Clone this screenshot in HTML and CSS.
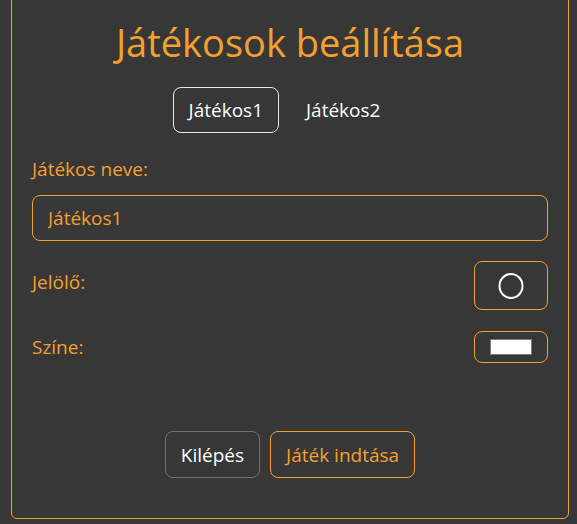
FILE: index.html
```html
<!DOCTYPE html>
<html lang="hu">
<head>
<meta charset="utf-8">
<title>Játékosok beállítása</title>
<link rel="stylesheet" href="styles.css">
</head>
<body>
<div class="card">
  <h1 class="title">Játékosok beállítása</h1>
  <nav class="tabs">
    <button class="tab active">Játékos1</button>
    <button class="tab">Játékos2</button>
  </nav>
  <label class="label name-label" for="pname">Játékos neve:</label>
  <input class="text-input" id="pname" type="text" value="Játékos1">
  <div class="row marker-row">
    <span class="label">Jelölő:</span>
    <button class="marker-btn" aria-label="Jelölő">
      <svg width="26" height="26" viewBox="0 0 26 26"><ellipse cx="13" cy="13" rx="11.5" ry="12" fill="none" stroke="#ffffff" stroke-width="2"/></svg>
    </button>
  </div>
  <div class="row color-row">
    <span class="label">Színe:</span>
    <span class="color-box"><span class="swatch"></span></span>
  </div>
  <div class="actions">
    <button class="btn btn-exit">Kilépés</button>
    <button class="btn btn-start">Játék indtása</button>
  </div>
</div>
</body>
</html>
```
FILE: styles.css
```css
html, body {
  margin: 0;
  padding: 0;
  background: #363736;
  overflow: hidden;
}
body {
  font-family: "Open Sans", "Noto Sans", sans-serif;
  color: #f5a031;
}
.card {
  margin: -12px 8px 0 11px;
  border: 1px solid #f5a031;
  border-radius: 6px;
  padding: 0 20px 40px 20px;
  height: 489px;
  box-sizing: content-box;
}
.title {
  margin: 0;
  padding-top: 27px;
  text-align: center;
  font-weight: 400;
  font-size: 38px;
  line-height: 52px;
  color: #f5a031;
}
.tabs {
  display: flex;
  justify-content: center;
  gap: 11px;
  margin-top: 19px;
  padding-right: 11px;
}
.tab {
  font-family: inherit;
  font-size: 19px;
  color: #ffffff;
  background: transparent;
  border: 1px solid transparent;
  border-radius: 8px;
  box-sizing: border-box;
  height: 46px;
  padding: 0 15px;
}
.tab.active {
  border-color: #e8e8e8;
}
.label {
  font-size: 19px;
  line-height: 26px;
  color: #f5a031;
}
.name-label {
  display: block;
  margin-top: 23px;
}
.text-input {
  display: block;
  box-sizing: border-box;
  width: 100%;
  height: 46px;
  margin-top: 13px;
  padding: 0 15px;
  background: transparent;
  border: 1px solid #f5a031;
  border-radius: 8px;
  font-family: inherit;
  font-size: 19px;
  color: #f5a031;
  outline: none;
}
.row {
  display: flex;
  justify-content: space-between;
  align-items: center;
}
.marker-row {
  margin-top: 20px;
}
.marker-row .label {
  margin-top: -8px;
}
.marker-btn {
  box-sizing: border-box;
  width: 74px;
  height: 49px;
  background: transparent;
  border: 1px solid #f5a031;
  border-radius: 8px;
  display: flex;
  align-items: center;
  justify-content: center;
  padding: 0;
}
.color-row {
  margin-top: 21px;
}
.color-box {
  box-sizing: border-box;
  width: 74px;
  height: 32px;
  border: 1px solid #f5a031;
  border-radius: 8px;
  display: flex;
  align-items: center;
  justify-content: center;
}
.swatch {
  display: block;
  box-sizing: border-box;
  width: 42px;
  height: 16px;
  background: #ffffff;
  border: 1px solid #7a7a7a;
}
.actions {
  display: flex;
  justify-content: center;
  gap: 10px;
  margin-top: 68px;
}
.btn {
  font-family: inherit;
  font-size: 19px;
  box-sizing: border-box;
  height: 47px;
  padding: 0 15px;
  background: transparent;
  border-radius: 8px;
}
.btn-exit {
  color: #ffffff;
  border: 1px solid #6c757d;
}
.btn-start {
  color: #f5a031;
  border: 1px solid #f5a031;
}
```
